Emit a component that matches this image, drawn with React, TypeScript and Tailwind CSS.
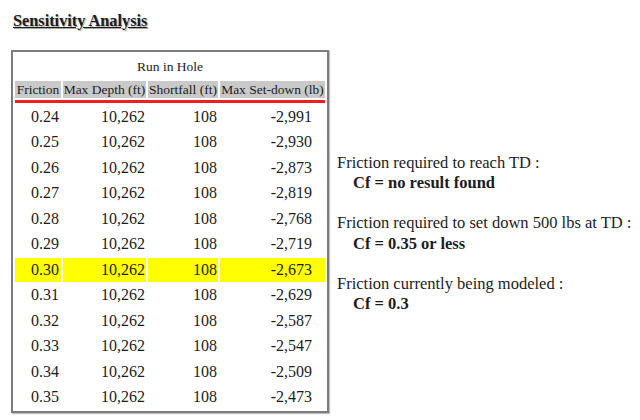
const rows: [string, string, string, string][] = [
  ['0.24', '10,262', '108', '-2,991'],
  ['0.25', '10,262', '108', '-2,930'],
  ['0.26', '10,262', '108', '-2,873'],
  ['0.27', '10,262', '108', '-2,819'],
  ['0.28', '10,262', '108', '-2,768'],
  ['0.29', '10,262', '108', '-2,719'],
  ['0.30', '10,262', '108', '-2,673'],
  ['0.31', '10,262', '108', '-2,629'],
  ['0.32', '10,262', '108', '-2,587'],
  ['0.33', '10,262', '108', '-2,547'],
  ['0.34', '10,262', '108', '-2,509'],
  ['0.35', '10,262', '108', '-2,473'],
];

const modeled = '0.30';

function SensitivityTable() {
  return (
    <table className="table-fixed w-[318px] border-separate border-spacing-[2px] border-2 border-[#7c7c7c] shadow-[1px_1px_1px_rgba(0,0,0,0.25)]">
      <colgroup>
        <col className="w-[46px]" />
        <col className="w-[83px]" />
        <col className="w-[70px]" />
        <col className="w-[105px]" />
      </colgroup>
      <thead>
        <tr>
          <th
            colSpan={4}
            className="h-[25px] p-0 text-[13.5px] font-normal leading-[17px] text-center"
          >
            Run in Hole
          </th>
        </tr>
        <tr>
          {['Friction', 'Max Depth (ft)', 'Shortfall (ft)', 'Max Set-down (lb)'].map(
            (h) => (
              <th
                key={h}
                className="h-[17px] p-0 bg-[#c9c9c9] text-[13.5px] font-normal leading-[17px] text-center whitespace-nowrap overflow-hidden"
              >
                {h}
              </th>
            ),
          )}
        </tr>
        <tr>
          <td colSpan={4} className="h-[3px] p-0 bg-[#f01e1e]"></td>
        </tr>
      </thead>
      <tbody>
        {rows.map((r) => {
          const hl = r[0] === modeled ? 'bg-[#ffff00]' : '';
          return (
            <tr key={r[0]}>
              <td className={`h-[23.5px] p-0 pr-[2px] text-right leading-[18px] ${hl}`}>
                {r[0]}
              </td>
              <td className={`h-[23.5px] p-0 pr-[1px] text-right leading-[18px] ${hl}`}>
                {r[1]}
              </td>
              <td className={`h-[23.5px] p-0 pr-[1px] text-right leading-[18px] ${hl}`}>
                {r[2]}
              </td>
              <td className={`h-[23.5px] p-0 pr-[13px] text-right leading-[18px] ${hl}`}>
                {r[3]}
              </td>
            </tr>
          );
        })}
      </tbody>
    </table>
  );
}

export default function App() {
  return (
    <div className="w-[640px] h-[420px] bg-white text-[#1c1c1c] text-[16px] pt-[11px] pl-[11px] font-[Liberation_Serif,Times_New_Roman,serif]">
      <h2 className="ml-[2px] text-[16.3px] font-bold underline leading-[19px] [text-shadow:1px_1px_1px_rgba(0,0,0,0.35)]">
        Sensitivity Analysis
      </h2>

      <div className="flex items-center gap-2 mt-[20px]">
        <SensitivityTable />

        {/* Summary */}
        <div className="pt-[4px] text-[16.5px] leading-[20.1px]">
          <div>Friction required to reach TD :</div>
          <div className="pl-4 font-bold">Cf = no result found</div>
          <div className="h-[20.1px]"></div>
          <div>Friction required to set down 500 lbs at TD :</div>
          <div className="pl-4 font-bold">Cf = 0.35 or less</div>
          <div className="h-[20.1px]"></div>
          <div>Friction currently being modeled :</div>
          <div className="pl-4 font-bold">Cf = 0.3</div>
        </div>
      </div>
    </div>
  );
}
